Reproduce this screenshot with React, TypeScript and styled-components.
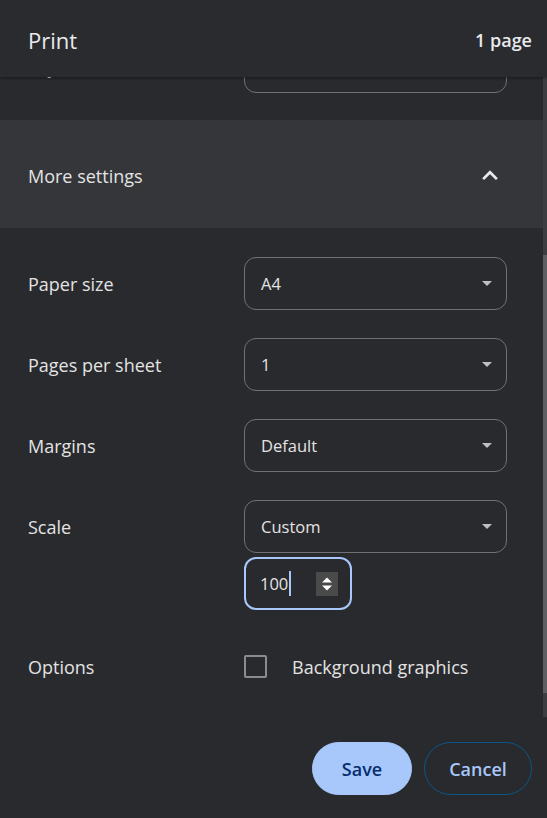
import React, { useLayoutEffect, useRef } from "react";
import styled, { createGlobalStyle } from "styled-components";

const SCROLL_TOP = 260;
const TRACK_HEIGHT = 640;
const CONTENT_HEIGHT = 935;

const Global = createGlobalStyle`
  html, body { margin: 0; padding: 0; background: #292a2d; }
  body { font-family: "Open Sans", "Noto Sans", sans-serif; color: #e3e3e3; }
  #root { height: 100vh; }
  * { box-sizing: border-box; }
`;

const Shell = styled.div`
  display: flex;
  flex-direction: column;
  height: 100vh;
  background: #292a2d;
`;

const Header = styled.header`
  position: relative;
  z-index: 1;
  flex: 0 0 77px;
  display: flex;
  align-items: center;
  justify-content: space-between;
  padding: 3px 15px 0 28px;
  background: #2a2b2e;
  box-shadow: 0 1px 3px rgba(0, 0, 0, 0.45);
`;

const Title = styled.h1`
  margin: 0;
  font-size: 22px;
  font-weight: 400;
  color: #e8eaed;
`;

const PageCount = styled.span`
  font-size: 18px;
  font-weight: 600;
  color: #e8eaed;
`;

const Body = styled.div`
  flex: 1 1 auto;
  min-height: 0;
  display: flex;
`;

const Scroller = styled.div`
  flex: 1 1 auto;
  overflow: hidden;
`;

const ScrollTrack = styled.div`
  flex: 0 0 4px;
  background: #3c3d40;
`;

const ScrollThumb = styled.div`
  width: 4px;
  background: #5d5e61;
`;

const Content = styled.div`
  padding: 47px 0 45px;
`;

const Row = styled.div<{ $bottom?: number }>`
  display: grid;
  grid-template-columns: 216px 1fr;
  align-items: start;
  padding: 14px 36px ${(p) => p.$bottom ?? 14}px 28px;
`;

const Label = styled.div`
  height: 53px;
  display: flex;
  align-items: center;
  font-size: 18px;
  color: #e3e3e3;
`;

const Controls = styled.div`
  display: flex;
  flex-direction: column;
  align-items: flex-start;
  gap: 4px;
`;

const Select = styled.div`
  width: 100%;
  height: 53px;
  display: flex;
  align-items: center;
  justify-content: space-between;
  padding: 0 14px 0 16px;
  border: 1px solid #6f7175;
  border-radius: 12px;
  font-size: 16.5px;
  color: #e3e3e3;
`;

const MoreSettings = styled.div`
  margin: 13px 0 15px;
  height: 108px;
  display: flex;
  align-items: center;
  justify-content: space-between;
  padding: 3px 38px 0 28px;
  background: #35363a;
  font-size: 18px;
  color: #e3e3e3;
`;

const NumberBox = styled.div`
  width: 108px;
  height: 53px;
  display: flex;
  align-items: center;
  padding: 0 12px 0 14px;
  border: 2.5px solid #a8c7fa;
  border-radius: 12px;
  font-size: 16.5px;
  color: #e3e3e3;
`;

const Caret = styled.span`
  display: inline-block;
  width: 2px;
  height: 25px;
  margin-left: 1px;
  background: #a8c7fa;
`;

const Spinner = styled.div`
  margin-left: auto;
  width: 22px;
  height: 24px;
  display: flex;
  align-items: center;
  justify-content: center;
  background: #4a4a4b;
`;

const CheckLine = styled.label`
  height: 53px;
  display: flex;
  align-items: center;
  gap: 25px;
  font-size: 18px;
  color: #e3e3e3;
`;

const CheckBox = styled.span`
  width: 23px;
  height: 23px;
  border: 2.5px solid #8b8c8f;
  border-radius: 2px;
`;

const Footer = styled.footer`
  flex: 0 0 101px;
  display: flex;
  justify-content: flex-end;
  align-items: flex-start;
  gap: 12px;
  padding: 25px 15px 0 0;
`;

const Button = styled.button<{ $primary?: boolean }>`
  height: 53px;
  width: ${(p) => (p.$primary ? 100 : 108)}px;
  border-radius: 27px;
  border: 1px solid ${(p) => (p.$primary ? "#a8c7fa" : "#0b5788")};
  background: ${(p) => (p.$primary ? "#a8c7fa" : "transparent")};
  color: ${(p) => (p.$primary ? "#062e6f" : "#a8c7fa")};
  font-family: inherit;
  font-size: 18px;
  font-weight: 600;
  padding: 0;
`;

const Arrow = () => (
  <svg width="10" height="5" viewBox="0 0 10 5">
    <path d="M0 0h10L5 5z" fill="#bdc1c6" />
  </svg>
);

const Chevron = () => (
  <svg width="30" height="30" viewBox="0 0 24 24">
    <polyline points="6.5 14.5 12 9 17.5 14.5" fill="none" stroke="#e8eaed" strokeWidth="2.2" />
  </svg>
);

const SpinIcon = () => (
  <svg width="12" height="18" viewBox="0 0 12 18">
    <path d="M1 7.5L6 2.5L11 7.5z" fill="#ffffff" />
    <path d="M1 10.5L6 15.5L11 10.5z" fill="#ffffff" />
  </svg>
);

const topRows = [
  { label: "Destination", value: "Save as PDF" },
  { label: "Pages", value: "All" },
  { label: "Layout", value: "Portrait" },
];

const moreRows = [
  { label: "Paper size", value: "A4" },
  { label: "Pages per sheet", value: "1" },
  { label: "Margins", value: "Default" },
];

export default function App() {
  const ref = useRef<HTMLDivElement>(null);
  useLayoutEffect(() => {
    if (ref.current) ref.current.scrollTop = SCROLL_TOP;
  }, []);

  const thumbTop = Math.round((SCROLL_TOP / CONTENT_HEIGHT) * TRACK_HEIGHT);
  const thumbHeight = Math.round((TRACK_HEIGHT / CONTENT_HEIGHT) * TRACK_HEIGHT);

  return (
    <>
      <Global />
      <Shell>
        <Header>
          <Title>Print</Title>
          <PageCount>1 page</PageCount>
        </Header>
        <Body>
          <Scroller ref={ref}>
            <Content>
              {topRows.map((r) => (
                <Row key={r.label}>
                  <Label>{r.label}</Label>
                  <Select>
                    <span>{r.value}</span>
                    <Arrow />
                  </Select>
                </Row>
              ))}
              <MoreSettings>
                <span>More settings</span>
                <Chevron />
              </MoreSettings>
              {moreRows.map((r) => (
                <Row key={r.label}>
                  <Label>{r.label}</Label>
                  <Select>
                    <span>{r.value}</span>
                    <Arrow />
                  </Select>
                </Row>
              ))}
              <Row $bottom={16}>
                <Label>Scale</Label>
                <Controls>
                  <Select>
                    <span>Custom</span>
                    <Arrow />
                  </Select>
                  <NumberBox>
                    <span>100</span>
                    <Caret />
                    <Spinner>
                      <SpinIcon />
                    </Spinner>
                  </NumberBox>
                </Controls>
              </Row>
              <Row>
                <Label>Options</Label>
                <CheckLine>
                  <CheckBox />
                  <span>Background graphics</span>
                </CheckLine>
              </Row>
            </Content>
          </Scroller>
          <ScrollTrack>
            <ScrollThumb style={{ marginTop: thumbTop, height: thumbHeight }} />
          </ScrollTrack>
        </Body>
        <Footer>
          <Button $primary>Save</Button>
          <Button>Cancel</Button>
        </Footer>
      </Shell>
    </>
  );
}
